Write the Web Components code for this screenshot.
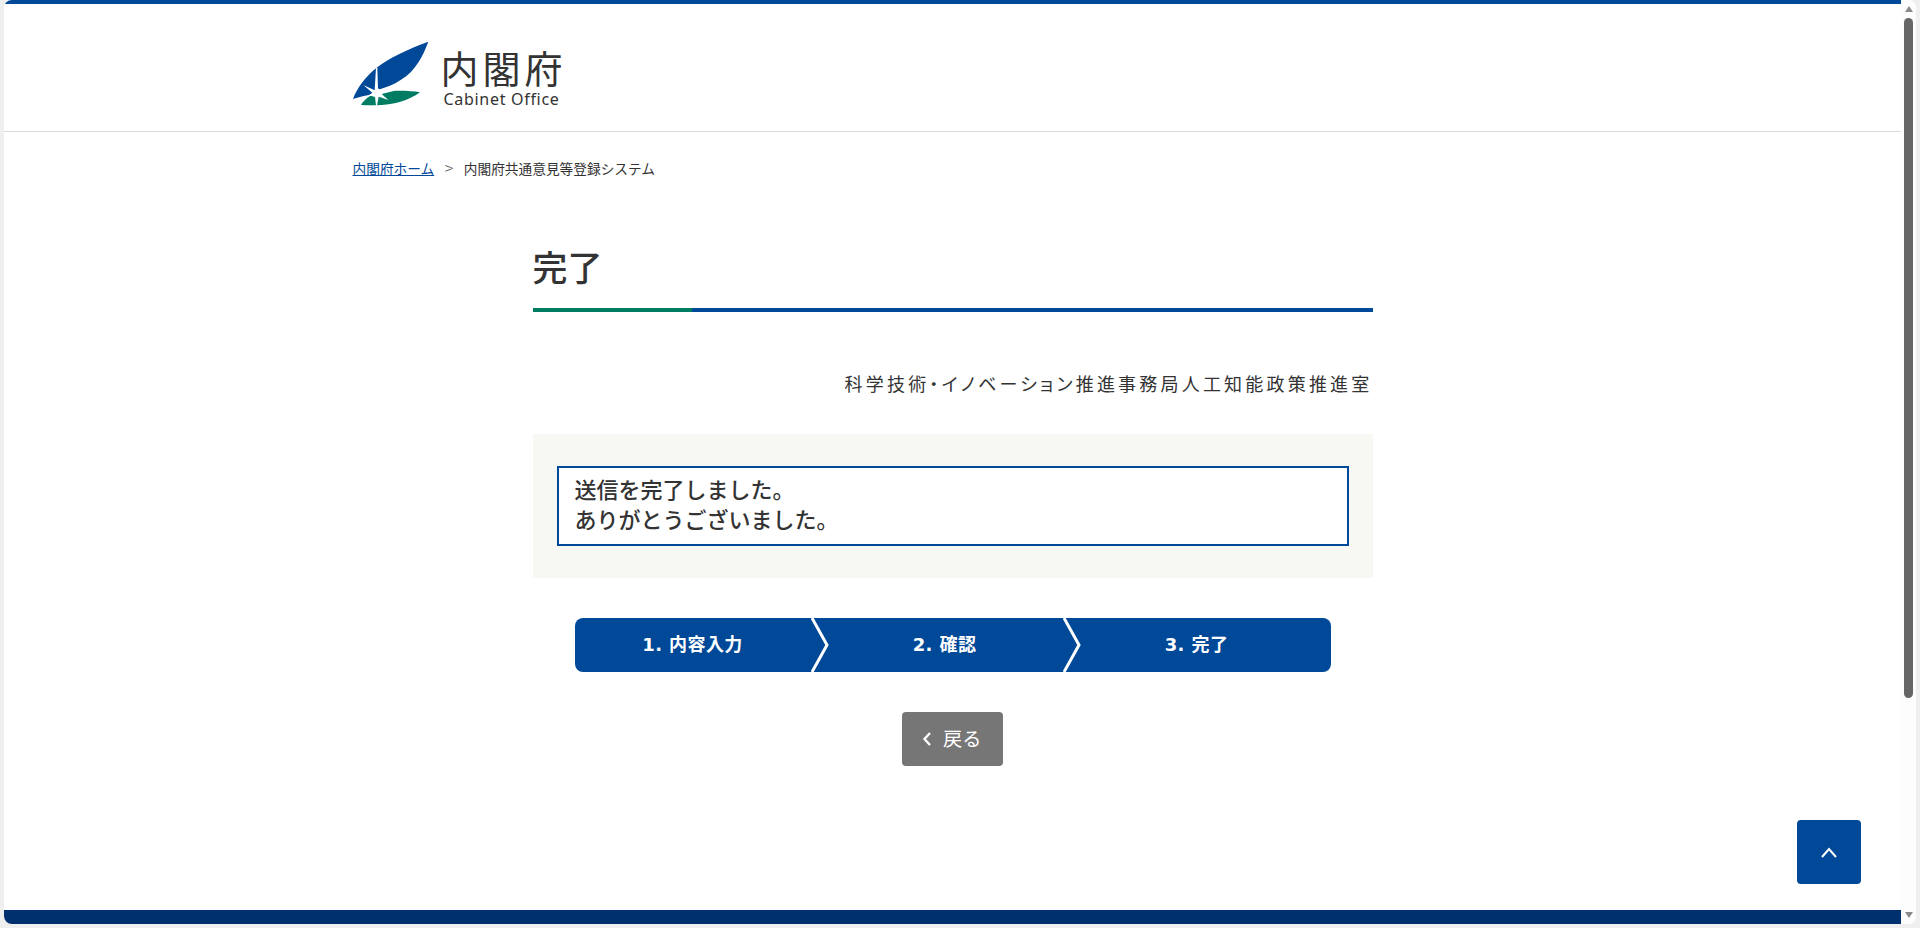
<!DOCTYPE html>
<html lang="ja">
<head>
<meta charset="utf-8">
<title>完了</title>
<style>
html,body{margin:0;height:100%;overflow:hidden;background:#efefef;}
body{font-family:"Noto Sans CJK JP","Noto Sans",sans-serif;color:#333;}
</style>
</head>
<body>
<app-window>
  <page-header slot="page"></page-header>
  <bread-crumbs slot="page"></bread-crumbs>
  <main-panel slot="page">
    <page-title>完了</page-title>
    <org-name>科学技術・イノベーション推進事務局人工知能政策推進室</org-name>
    <message-panel>送信を完了しました。<br>ありがとうございました。</message-panel>
    <step-bar></step-bar>
    <back-button>戻る</back-button>
  </main-panel>
  <page-footer slot="page"></page-footer>
  <top-button slot="page"></top-button>
</app-window>
<script>
const BLUE='#004898', GREEN='#007c63';
function def(name, html){
  customElements.define(name, class extends HTMLElement{
    constructor(){super();this.attachShadow({mode:'open'}).innerHTML=html;}
  });
}
def('app-window',`<style>
:host{display:flex;box-sizing:border-box;height:924px;margin:0 4px;background:#fff;border-radius:8px;overflow:hidden;}
.page{flex:1;min-width:0;display:flex;flex-direction:column;position:relative;border-top:4px solid ${BLUE};}
.bar{width:15px;flex:none;display:flex;flex-direction:column;align-items:center;background:#fdfdfd;padding:6px 0;box-sizing:border-box;}
.up{width:0;height:0;border:4.5px solid transparent;border-top:0;border-bottom:6px solid #8a8a8a;}
.down{width:0;height:0;border:4.5px solid transparent;border-bottom:0;border-top:6px solid #8a8a8a;margin-top:auto;}
.thumb{width:9px;height:680px;margin-top:6px;background:#666;border-radius:4.5px;}
</style>
<div class="page"><slot name="page"></slot></div>
<div class="bar"><div class="up"></div><div class="thumb"></div><div class="down"></div></div>`);
def('page-header',`<style>
:host{display:block;height:127px;border-bottom:1px solid #d9d9d9;}
.in{width:1200px;margin:0 auto;height:100%;display:flex;align-items:flex-start;}
svg{display:block;width:100px;height:75px;margin:31px 0 0 -8px;flex:none;}
.t{margin:0 0 0 -4px;padding-top:41px;color:#333;line-height:1;}
.ja{font-size:38px;font-weight:400;letter-spacing:4px;line-height:43px;white-space:nowrap;}
.en{font-family:"Noto Sans",sans-serif;font-size:16px;letter-spacing:.7px;line-height:18px;margin:2px 0 0 3px;white-space:nowrap;}
</style><div class="in">
<svg viewBox="0 0 300 225" aria-hidden="true">
<path fill="${BLUE}" d="M250 20C190 42 130 70 95 98C62 124 36 158 24 192C45 186 62 182 82 178L100 164C125 156 145 150 168 134C212 108 234 62 250 20Z"/>
<path fill="${GREEN}" d="M48 210C60 190 80 178 105 172C140 166 190 166 225 172C195 195 150 208 110 210C90 211 68 211 48 210Z"/>
<path fill="#fff" d="M93 98L97 98L99 160L110 168L155 166L110 177L130 195L101 185L96 212L93 212L90 186L72 181L82 173L55 150L89 166Z"/>
</svg>
<div class="t"><div class="ja">内閣府</div><div class="en">Cabinet Office</div></div>
</div>`);
def('bread-crumbs',`<style>
:host{display:block;width:1200px;margin:0 auto;padding-top:26px;font-size:13.7px;line-height:20px;color:#333;white-space:nowrap;}
a{color:${BLUE};text-decoration:underline;}
i{font-style:normal;margin:0 10.5px;font-size:16px;line-height:1;color:#555;font-weight:300;}
</style><a href="#">内閣府ホーム</a><i>&gt;</i>内閣府共通意見等登録システム`);
def('main-panel',`<style>
:host{display:flex;flex-direction:column;width:840px;margin:0 auto;}
</style><slot></slot>`);
def('page-title',`<style>
:host{display:block;margin-top:70px;height:64px;box-sizing:border-box;border-bottom:4px solid ${BLUE};position:relative;font-size:35px;font-weight:500;line-height:35px;color:#333;}
:host::after{content:"";position:absolute;left:0;bottom:-4px;width:159px;height:4px;background:${GREEN};}
</style><slot></slot>`);
def('org-name',`<style>
:host{display:block;margin-top:58px;text-align:right;font-size:18px;line-height:26px;letter-spacing:3.2px;color:#333;white-space:nowrap;font-feature-settings:"palt" 1;}
</style><slot></slot>`);
def('message-panel',`<style>
:host{display:block;margin-top:38px;padding:32px 24px;background:#f7f8f4;}
.b{box-sizing:border-box;height:80px;border:2px solid ${BLUE};background:#fff;padding:5px 16px;font-size:22px;font-weight:500;line-height:30px;color:#333;}
</style><div class="b"><slot></slot></div>`);
def('step-bar',`<style>
:host{display:flex;width:756px;height:54px;margin:40px auto 0;background:${BLUE};border-radius:8px;color:#fff;font-family:"DejaVu Sans","Noto Sans CJK JP",sans-serif;font-size:18px;font-weight:700;letter-spacing:.4px;line-height:54px;text-align:center;}
div{flex:1;box-sizing:border-box;padding-right:16px;position:relative;}
svg{position:absolute;right:-2px;top:0;width:18px;height:54px;}
</style>
<div>1. 内容入力<svg viewBox="0 0 18 54"><path d="M1 0L16 27L1 54" fill="none" stroke="#fff" stroke-width="3"/></svg></div>
<div>2. 確認<svg viewBox="0 0 18 54"><path d="M1 0L16 27L1 54" fill="none" stroke="#fff" stroke-width="3"/></svg></div>
<div>3. 完了</div>`);
def('back-button',`<style>
:host{display:flex;align-self:center;align-items:center;box-sizing:border-box;width:101px;height:54px;margin-top:40px;padding-left:20px;background:#767676;border-radius:4px;color:#fff;font-size:19.2px;line-height:1;}
svg{width:10px;height:16px;margin-right:11px;flex:none;}
</style><svg viewBox="0 0 10 16"><path d="M8 2L2.5 8L8 14" fill="none" stroke="#fff" stroke-width="2.4"/></svg><slot></slot>`);
def('page-footer',`<style>
:host{display:block;height:14px;margin-top:auto;background:#00316e;}
</style>`);
def('top-button',`<style>
:host{position:absolute;left:1793px;top:816px;width:64px;height:64px;background:${BLUE};border-radius:4px;display:flex;align-items:center;justify-content:center;}
svg{width:16px;height:11px;}
</style><svg viewBox="0 0 16 11"><path d="M1 10L8 2L15 10" fill="none" stroke="#fff" stroke-width="2"/></svg>`);
</script>
</body>
</html>
